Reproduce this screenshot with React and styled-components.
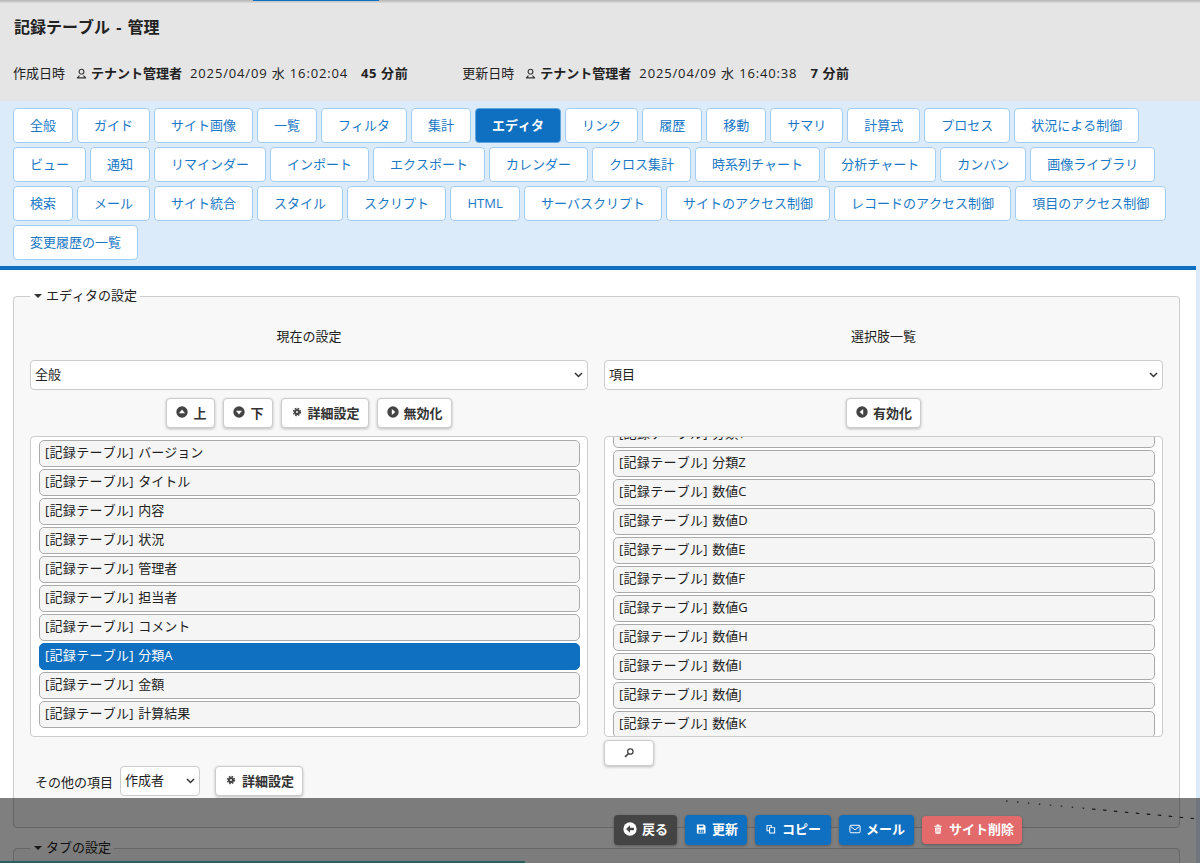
import React, { useEffect, useRef } from "react";
import styled, { createGlobalStyle } from "styled-components";

const FONT = `"Open Sans", "Noto Sans CJK JP", sans-serif`;
const CHEVRON = `url("data:image/svg+xml,%3Csvg xmlns='http://www.w3.org/2000/svg' width='9' height='6'%3E%3Cpath d='M1 1l3.5 3.5L8 1' fill='none' stroke='%23333' stroke-width='1.5'/%3E%3C/svg%3E")`;

const Global = createGlobalStyle`
  html, body { margin: 0; height: 863px; overflow: hidden; background: #dcebf9; }
  body { font-family: ${FONT}; font-size: 13px; color: #222; font-kerning: none; }
  * { box-sizing: border-box; }
`;

const Page = styled.div`position: relative; width: 1200px; height: 863px; overflow: hidden;`;
const TopStrip = styled.div`height: 3px; background: linear-gradient(#b4b4b4, #dcdcdc);`;
const TopIndicator = styled.div`width: 126px; height: 1px; margin-left: 253px; background: #0f6fc0;`;

const Header = styled.header`height: 98px; background: #e5e5e5; padding: 13px 13px 0;`;
const Title = styled.h1`margin: 0 0 0 1px; font-size: 16px; line-height: 22px; font-weight: 700; color: #222; word-spacing: 2px;`;
const Meta = styled.div`display: flex; align-items: center; height: 20px; margin-top: 25px; line-height: 20px;`;
const MetaLabel = styled.span`margin-right: 11px;`;
const MetaUser = styled.b`margin: 0 8px 0 4px; font-weight: 700;`;
const MetaDate = styled.span`margin-right: 13px; letter-spacing: 0.85px;`;
const MetaAge = styled.b`font-weight: 700; letter-spacing: 0.6px; margin-right: ${p => p.$gap}px;`;
const UserMark = styled.svg`width: 11px; height: 11px; color: #333; flex: none;`;

const TabBand = styled.nav`
  display: flex; flex-wrap: wrap; gap: 4px; align-content: flex-start;
  height: 169px; padding: 7px 20px 0 13px;
  background: #dcebf9; border-bottom: 4px solid #0f6fc0;
  width: 1196px;
`;
const Tab = styled.button`
  height: 35px; min-width: ${p => p.$min || 0}px; padding: 0 16px 2px; border-radius: 4px; font: inherit; font-size: 13px;
  border: 1px solid ${p => (p.$active ? "#5ea5e0" : "#a3cdf2")};
  background: ${p => (p.$active ? "#0f6fc0" : "#fff")};
  color: ${p => (p.$active ? "#fff" : "#1a78c6")};
  font-weight: ${p => (p.$active ? 700 : 400)};
  white-space: nowrap;
`;

const Main = styled.main`width: 1196px; height: 593px; background: #fff; padding: 17px 16px 0 13px;`;
const Field = styled.fieldset`
  margin: 0 0 11px; padding: 23px 16px 31px; min-width: 0;
  background: #f8f8f8; border: 1px solid #ccc; border-radius: 4px;
`;
const Legend = styled.legend`
  display: flex; align-items: center; gap: 4px; height: 18px; padding: 0 3px 2px;
  font-size: 13px; line-height: 16px; color: #222;
`;
const Caret = styled.i`
  width: 0; height: 0; border: 4px solid transparent; border-top: 4px solid #333; border-bottom: 0;
  margin: 2px 0 0 1px;
`;
const Columns = styled.div`display: grid; grid-template-columns: 558px 559px; column-gap: 16px;`;
const Column = styled.div`display: flex; flex-direction: column; min-width: 0;`;
const ColumnHead = styled.div`height: 18px; line-height: 16px; text-align: center; margin-bottom: 14px;`;
const Select = styled.select`
  appearance: none; width: ${p => p.$w || "100%"}; height: 30px; padding: 0 16px 2px 4px;
  font: inherit; font-size: 13px; color: #222;
  background: #fff ${CHEVRON} no-repeat right 4px center; border: 1px solid #ccc; border-radius: 4px;
`;
const Buttons = styled.div`display: flex; justify-content: center; gap: 8px; margin: 8px 0;`;
const Btn = styled.button`
  display: inline-flex; align-items: center; gap: 5px; height: 30px; padding: 0 8px 2px 9px;
  font: inherit; font-size: 13px; font-weight: 700; color: #333; white-space: nowrap;
  background: #fff; border: 1px solid #ccc; border-radius: 4px; box-shadow: 0 1px 3px rgba(0,0,0,.25);
`;
const SearchBtn = styled(Btn)`width: 50px; height: 26px; justify-content: center; margin-top: 3px; padding: 0;`;
const List = styled.div`
  height: 301px; overflow: hidden; padding: 3px 7px 0 8px; background: #fff;
  border: 1px solid #ccc; border-radius: 4px;
`;
const Item = styled.div`
  height: 27px; line-height: 23px; margin-bottom: 2px; padding: 0 5px; font-size: 13px; word-spacing: 1px;
  color: ${p => (p.$active ? "#fff" : "#222")};
  background: ${p => (p.$active ? "#0f6fc0" : "#f5f5f5")};
  border: 1px solid ${p => (p.$active ? "#0f6fc0" : "#aaa")};
  border-radius: 5px; white-space: nowrap;
`;
const Prefix = styled.span`letter-spacing: 0.3px;`;
const OtherRow = styled.div`display: flex; align-items: center; margin-top: 29px; padding-left: 5px;`;
const OtherLabel = styled.span`margin: 0 7px 0 0; white-space: nowrap;`;
const OtherBtn = styled(Btn)`margin-left: 15px;`;
const TabField = styled(Field)`height: 60px;`;

const Overlay = styled.footer`
  position: absolute; left: 0; right: 0; bottom: 0; height: 65px; padding: 17px 0 0 614px;
  display: flex; align-items: flex-start; gap: 8px; background: rgba(0,0,0,.5);
`;
const Action = styled.button`
  display: inline-flex; align-items: center; gap: 5px; height: ${p => (p.$danger ? 28 : 30)}px;
  min-width: ${p => p.$min || 0}px;
  margin-top: ${p => (p.$danger ? 1 : 0)}px; padding: 0 ${p => (p.$danger ? 8 : 9)}px 3px ${p => (p.$back ? 9 : 10)}px;
  border: 0; border-radius: 4px; font: inherit; font-size: 13px; font-weight: 700; color: #fff; white-space: nowrap;
  background: ${p => (p.$back ? "#444" : p.$danger ? "#e26a6a" : "#0f6fc0")};
  box-shadow: 0 1px 3px rgba(0,0,0,.3);
`;
const Trace = styled.svg`position: absolute; left: 1000px; top: 0; width: 200px; height: 25px;`;
const BottomEdge = styled.div`position: absolute; left: 0; bottom: 0; width: 525px; height: 2px; background: #2a5f66;`;

const Ico = styled.svg`width: ${p => p.$s || 12}px; height: ${p => p.$s || 12}px; flex: none; display: block;`;

const Icon = ({ name, size, hole = "#fff", color = "#444" }) => {
  const disc = d => (<><circle cx="8" cy="8" r="7.6" fill={color} /><path d={d} fill={hole} /></>);
  const shapes = {
    up: disc("M8 4.8 12 9.6H4z"),
    down: disc("M8 11.2 4 6.4h8z"),
    right: disc("M11.2 8 6.4 12V4z"),
    left: disc("M4.8 8 9.6 4v8z"),
    back: disc("M3.5 8 8 3.8v2.7h4.5v3H8v2.7z"),
    gear: (<><circle cx="8" cy="8" r="2.7" fill="none" stroke={color} strokeWidth="2.8" /><circle cx="8" cy="8" r="4.8" fill="none" stroke={color} strokeWidth="1.6" strokeDasharray="2.2 1.6" /></>),
    search: (<><circle cx="9.8" cy="6" r="3.6" fill="none" stroke={color} strokeWidth="1.7" /><path d="M7 9 2.8 13.2" stroke={color} strokeWidth="2.2" /></>),
    save: (<><path d="M2.5 2h9.5L14 4v10H2.5z" fill={color} /><path d="M5 3.5h6v2.5H5zM4.8 9h7v4h-7z" fill={hole} /><path d="M6.6 9.5h1v3h-1zM9 9.5h1v3H9z" fill={color} /></>),
    copy: (<path d="M2 2.5h7v3h4.5v8.5H5.5v-3H2zM3.3 3.8v5.9h2.2V5.5h2.2V3.8zM6.8 6.8v5.9h5.4V6.8z" fill={color} fillRule="evenodd" />),
    mail: (<><rect x="1.2" y="3" width="13.6" height="10" rx="1.4" fill="none" stroke={color} strokeWidth="1.3" /><path d="M2 4.5 8 9.2l6-4.7" fill="none" stroke={color} strokeWidth="1.3" /></>),
    trash: (<path d="M3 3.6h3.2V2h3.6v1.6H13v1.5H3zM4 6h8l-.7 8.2H4.7zM6.2 7.2v5.6h1V7.2zM8.8 7.2v5.6h1V7.2z" fill={color} fillRule="evenodd" />),
  };
  return <Ico $s={size} viewBox="0 0 16 16" aria-hidden="true">{shapes[name]}</Ico>;
};

const User = () => (
  <UserMark viewBox="0 0 12 12" aria-hidden="true">
    <circle cx="6" cy="4" r="2.6" fill="none" stroke="currentColor" strokeWidth="1.2" />
    <path d="M1.8 10.5 3.8 8.2M10.2 10.5 8.2 8.2M1 10.8h10" fill="none" stroke="currentColor" strokeWidth="1.2" />
  </UserMark>
);

const tabs = ["全般","ガイド","サイト画像","一覧","フィルタ","集計","エディタ","リンク","履歴","移動","サマリ","計算式","プロセス","状況による制御","ビュー","通知","リマインダー","インポート","エクスポート","カレンダー","クロス集計","時系列チャート","分析チャート","カンバン","画像ライブラリ","検索","メール","サイト統合","スタイル","スクリプト","HTML","サーバスクリプト","サイトのアクセス制御","レコードのアクセス制御","項目のアクセス制御","変更履歴の一覧"];
const tabMin = { "エディタ": 86, HTML: 70 };
const P = "[記録テーブル]";
const current = ["バージョン","タイトル","内容","状況","管理者","担当者","コメント","分類A","金額","計算結果"];
const choices = ["分類X","分類Y","分類Z","数値C","数値D","数値E","数値F","数値G","数値H","数値I","数値J","数値K","数値L","数値M","数値N"];

export default function App() {
  const scroller = useRef(null);
  useEffect(() => { if (scroller.current) scroller.current.scrollTop = 48; }, []);
  return (
    <Page>
      <Global />
      <TopStrip><TopIndicator /></TopStrip>
      <Header>
        <Title>記録テーブル - 管理</Title>
        <Meta>
          <MetaLabel>作成日時</MetaLabel><User /><MetaUser>テナント管理者</MetaUser>
          <MetaDate>2025/04/09 水 16:02:04</MetaDate><MetaAge $gap={54}>45 分前</MetaAge>
          <MetaLabel>更新日時</MetaLabel><User /><MetaUser>テナント管理者</MetaUser>
          <MetaDate>2025/04/09 水 16:40:38</MetaDate><MetaAge $gap={0}>7 分前</MetaAge>
        </Meta>
      </Header>
      <TabBand>
        {tabs.map(t => <Tab key={t} $active={t === "エディタ"} $min={tabMin[t]}>{t}</Tab>)}
      </TabBand>
      <Main>
        <Field>
          <Legend><Caret />エディタの設定</Legend>
          <Columns>
            <Column>
              <ColumnHead>現在の設定</ColumnHead>
              <Select defaultValue="全般"><option>全般</option></Select>
              <Buttons>
                <Btn><Icon name="up" />上</Btn>
                <Btn><Icon name="down" />下</Btn>
                <Btn><Icon name="gear" />詳細設定</Btn>
                <Btn><Icon name="right" />無効化</Btn>
              </Buttons>
              <List>
                {current.map(c => <Item key={c} $active={c === "分類A"}><Prefix>{P}</Prefix> {c}</Item>)}
              </List>
              <OtherRow>
                <OtherLabel>その他の項目</OtherLabel>
                <Select $w="80px" defaultValue="作成者"><option>作成者</option></Select>
                <OtherBtn><Icon name="gear" />詳細設定</OtherBtn>
              </OtherRow>
            </Column>
            <Column>
              <ColumnHead>選択肢一覧</ColumnHead>
              <Select defaultValue="項目"><option>項目</option></Select>
              <Buttons>
                <Btn><Icon name="left" />有効化</Btn>
              </Buttons>
              <List ref={scroller}>
                {choices.map(c => <Item key={c}><Prefix>{P}</Prefix> {c}</Item>)}
              </List>
              <SearchBtn aria-label="検索"><Icon name="search" /></SearchBtn>
            </Column>
          </Columns>
        </Field>
        <TabField>
          <Legend><Caret />タブの設定</Legend>
        </TabField>
      </Main>
      <Overlay>
        <Action $back><Icon name="back" size={14} color="#fff" hole="#444" />戻る</Action>
        <Action><Icon name="save" color="#fff" hole="#0f6fc0" />更新</Action>
        <Action $min={76}><Icon name="copy" color="#fff" />コピー</Action>
        <Action><Icon name="mail" color="#fff" />メール</Action>
        <Action $danger><Icon name="trash" color="#fff" />サイト削除</Action>
        <Trace viewBox="0 0 200 25" aria-hidden="true">
          <path d="M6 3 38 6 60 8 92 11" fill="none" stroke="#111" strokeWidth="1.1" strokeDasharray="1.5 9.5" />
          <path d="M92 11 123 14 157 17 188 20 200 21" fill="none" stroke="#111" strokeWidth="1.1" strokeDasharray="3.5 7.5" />
        </Trace>
        <BottomEdge />
      </Overlay>
    </Page>
  );
}
